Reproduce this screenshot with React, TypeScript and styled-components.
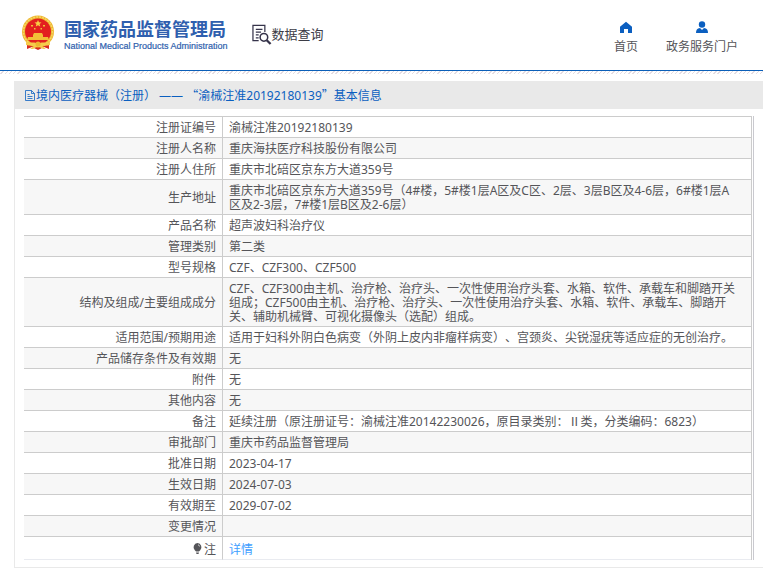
import React from "react";
import styled, { createGlobalStyle } from "styled-components";

const GlobalStyle = createGlobalStyle`
  * { box-sizing: border-box; }
  body {
    margin: 0;
    background: #fff;
    color: #555559;
    font: 12px/14px "Noto Sans", "Noto Sans CJK SC", sans-serif;
    text-spacing-trim: space-all;
  }
`;

const Header = styled.header`
  display: flex;
  align-items: flex-start;
  height: 71px;
  padding: 0 25px 0 21px;
  border-bottom: 1px solid #0b5fb8;
`;

const Hatching = styled.div`
  height: 3px;
  margin-bottom: 7px;
  background: repeating-linear-gradient(135deg, #fff 0 2px, #e4dce2 2px 3px);
`;

const Brand = styled.a`
  display: flex;
  gap: 9px;
  margin-top: 15px;
  color: #2f5fae;
  text-decoration: none;
`;

const BrandNames = styled.span`
  display: flex;
  flex-direction: column;
  padding-top: 1px;
  white-space: nowrap;
`;

const BrandTitle = styled.strong`
  font: 700 18px/24px "Noto Sans CJK SC", sans-serif;
`;

const BrandSubtitle = styled.span`
  font: 9px/12px "Liberation Sans", sans-serif;
  -webkit-text-stroke: 0.2px;
`;

const Section = styled.div`
  display: flex;
  align-items: center;
  margin: 23px 0 0 24px;
  color: #3c3c46;
  font: 13px/22px "Noto Sans CJK SC", sans-serif;
  white-space: nowrap;
`;

const Nav = styled.nav`
  display: flex;
  gap: 28px;
  margin: 21px 0 0 auto;
`;

const NavLink = styled.a`
  display: flex;
  flex-direction: column;
  align-items: center;
  gap: 5px;
  color: #555559;
  line-height: 16px;
  text-decoration: none;
  white-space: nowrap;
`;

const Panel = styled.main`
  margin-left: 14px;
  border: 1px solid #e9e9e9;
  border-width: 0 0 1px 1px;
`;

const PanelTitle = styled.h1`
  display: flex;
  align-items: center;
  height: 28px;
  margin: 0 0 7px;
  padding: 1px 0 0 9px;
  background: #e9e9e9;
  color: #0b5fc0;
  font-size: 12px;
  font-weight: 400;
`;

const Quote = styled.span`
  font-family: "Noto Sans CJK SC", sans-serif;
`;

const TableFrame = styled.div`
  margin: 0 9px 7px;
  border-right: 1px solid #c9c9cf;
  padding-right: 1px;
`;

const Table = styled.table`
  width: 100%;
  border-collapse: separate;
  border-spacing: 0;
  border-top: 1px solid #ccc;
  border-right: 1px solid #ccc;
`;

const Row = styled.tr`
  &:nth-child(even) { background: #f7f7f7; }
  &:last-child > * { border-bottom-color: #e9ebf0; padding-top: 6px; }
`;

const Label = styled.th`
  width: 199px;
  padding: 4px 6px 2px;
  border-right: 1px solid #ccc;
  border-bottom: 1px solid #ccc;
  font-weight: 400;
  text-align: right;
`;

const Value = styled.td`
  height: 21px;
  padding: 4px 13px 2px 6px;
  border-bottom: 1px solid #ccc;
`;

const DetailLink = styled.a`
  color: #409eff;
  text-decoration: none;
`;

const Emblem = () => (
  <svg width="34" height="37" viewBox="0 0 34 37" aria-hidden="true">
    <path d="M6 25 6 34 11 32 17 35 23 32 28 34 28 25Z" fill="#d92b20" />
    <circle cx="17" cy="16.500" r="16" fill="#edb72e" />
    <circle cx="17" cy="16.500" r="14.500" fill="none" stroke="#f8d565" strokeWidth="1.500" strokeDasharray="2 1" />
    <circle cx="17" cy="16.500" r="13" fill="#e3201f" />
    <path d="m17 5 1 2.200 2.500.2-1.900 1.600.6 2.500L17 10.200l-2.200 1.300.6-2.500-1.900-1.600 2.500-.2Z" fill="#f7cf45" />
    <path d="M10 10h2v1.500h-2zM22 10h2v1.500h-2zM13 13h1.500v1.500H13zM19.500 13H21v1.500h-1.500zM12 20l1-2h8l1 2v2h5l1 3H6l1-3h5Z" fill="#f2bf38" />
    <path d="M5 27c5 2 7-1 12 2 5-3 7 0 12-2v3c-4 1-5 0-8 1l4 3h-3l-5-3-5 3H9l4-3c-3-1-4 0-8-1Z" fill="#f5cc4c" />
    <circle cx="17" cy="29" r="2.500" fill="#edb72e" />
  </svg>
);

const SearchDocIcon = () => (
  <svg width="20" height="21" viewBox="0 0 21 21" fill="none" stroke="#35334a" aria-hidden="true">
    <path d="M7 17H1V1h12.500v7M4 5h7M4 8h5.500M4 11h3M4 14h3" strokeWidth="1.300" />
    <circle cx="12.500" cy="13.500" r="4" strokeWidth="1.600" />
    <path d="m15.500 16.500 4 4" strokeWidth="2.400" />
  </svg>
);

const HomeIcon = () => (
  <svg width="14" height="13" viewBox="0 0 14 13" fill="#0b5fc0" aria-hidden="true">
    <path d="M7 .8 1 5.800V12h4V8h4v4h4V5.800Z" />
  </svg>
);

const UserIcon = () => (
  <svg width="14" height="13" viewBox="0 0 14 13" fill="#0b5fc0" aria-hidden="true">
    <circle cx="7" cy="3.500" r="3.200" />
    <path d="M1 12c0-3 1-4.500 4-5l2 2 2-2c3 .5 4 2 4 5Z" />
  </svg>
);

const DocIcon = () => (
  <svg width="12" height="12" viewBox="0 0 12 12" fill="none" stroke="currentColor" aria-hidden="true">
    <path d="M1.500.5h6l3 3v7h-9ZM7.500.5v3h3M3.500 4.500h2M3.500 6.500h5M3.500 8.500h5" strokeWidth=".8" />
  </svg>
);

const BulbIcon = () => (
  <svg width="12" height="11" viewBox="0 0 12 11" fill="#555559" aria-hidden="true">
    <path d="M5.500 0a4.300 4.300 0 0 1 2.700 7.300L7 8.500H4L2.800 7.300A4.300 4.300 0 0 1 5.500 0ZM4 9.500h3L6.500 11h-2Z" />
    <path d="M6 1.800c1 .2 1.500.8 1.600 1.700" fill="none" stroke="#fff" strokeWidth=".7" />
  </svg>
);

const records: [string, string][] = [
  ["注册证编号", "渝械注准20192180139"],
  ["注册人名称", "重庆海扶医疗科技股份有限公司"],
  ["注册人住所", "重庆市北碚区京东方大道359号"],
  ["生产地址", "重庆市北碚区京东方大道359号（4#楼，5#楼1层A区及C区、2层、3层B区及4-6层，6#楼1层A区及2-3层，7#楼1层B区及2-6层）"],
  ["产品名称", "超声波妇科治疗仪"],
  ["管理类别", "第二类"],
  ["型号规格", "CZF、CZF300、CZF500"],
  ["结构及组成/主要组成成分", "CZF、CZF300由主机、治疗枪、治疗头、一次性使用治疗头套、水箱、软件、承载车和脚踏开关组成；CZF500由主机、治疗枪、治疗头、一次性使用治疗头套、水箱、软件、承载车、脚踏开关、辅助机械臂、可视化摄像头（选配）组成。"],
  ["适用范围/预期用途", "适用于妇科外阴白色病变（外阴上皮内非瘤样病变）、宫颈炎、尖锐湿疣等适应症的无创治疗。"],
  ["产品储存条件及有效期", "无"],
  ["附件", "无"],
  ["其他内容", "无"],
  ["备注", "延续注册（原注册证号：渝械注准20142230026，原目录类别：Ⅱ类，分类编码：6823）"],
  ["审批部门", "重庆市药品监督管理局"],
  ["批准日期", "2023-04-17"],
  ["生效日期", "2024-07-03"],
  ["有效期至", "2029-07-02"],
  ["变更情况", ""],
];

export default function App() {
  return (
    <>
      <GlobalStyle />
      <Header>
        <Brand href="#">
          <Emblem />
          <BrandNames>
            <BrandTitle>国家药品监督管理局</BrandTitle>
            <BrandSubtitle>National Medical Products Administration</BrandSubtitle>
          </BrandNames>
        </Brand>
        <Section>
          <SearchDocIcon />
          数据查询
        </Section>
        <Nav>
          <NavLink href="#"><HomeIcon />首页</NavLink>
          <NavLink href="#"><UserIcon />政务服务门户</NavLink>
        </Nav>
      </Header>
      <Hatching />
      <Panel lang="zh-CN">
        <PanelTitle>
          <DocIcon />
          <span>境内医疗器械（注册） ——&nbsp;<Quote>“</Quote>渝械注准20192180139<Quote>”</Quote>基本信息</span>
        </PanelTitle>
        <TableFrame>
          <Table>
            <tbody>
              {records.map(([label, value]) => (
                <Row key={label}>
                  <Label scope="row">{label}</Label>
                  <Value>{value}</Value>
                </Row>
              ))}
              <Row>
                <Label scope="row"><BulbIcon />注</Label>
                <Value><DetailLink href="#">详情</DetailLink></Value>
              </Row>
            </tbody>
          </Table>
        </TableFrame>
      </Panel>
    </>
  );
}
